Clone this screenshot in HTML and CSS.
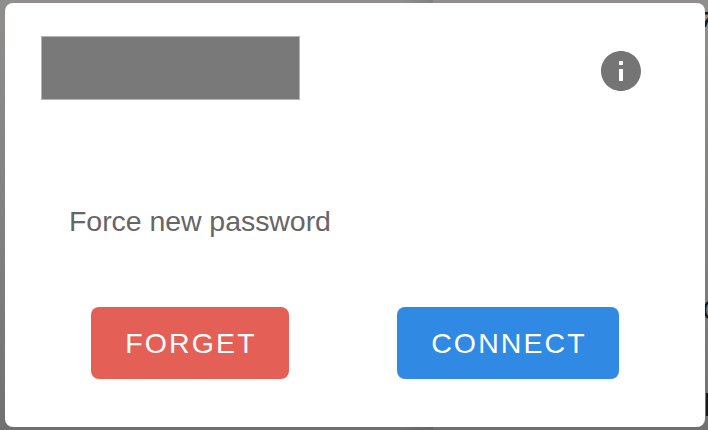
FILE: index.html
```html
<!DOCTYPE html>
<html lang="en">
<head>
<meta charset="utf-8">
<title>Connect</title>
<link rel="stylesheet" href="styles.css">
</head>
<body>
<span class="behind behind-top">7</span>
<span class="behind behind-mid">O</span>
<span class="behind behind-block"></span>
<main class="dialog">
  <header class="head">
    <div class="name"></div>
    <svg class="info" viewBox="2 2 20 20" aria-label="Info">
      <path d="M12 2C6.480 2 2 6.480 2 12s4.480 10 10 10 10-4.480 10-10S17.520 2 12 2zm1 15h-2v-6h2v6zm0-8h-2V7h2v2z"/>
    </svg>
  </header>
  <p class="option">Force new password</p>
  <div class="actions">
    <button class="btn forget">FORGET</button>
    <button class="btn connect">CONNECT</button>
  </div>
</main>
</body>
</html>
```
FILE: styles.css
```css
* { box-sizing: border-box; }
body {
  margin: 0;
  height: 430px;
  padding: 3px 3px 3px 5px;
  overflow: hidden;
  position: relative;
  background:
    linear-gradient(90deg, transparent 400px, rgba(0, 0, 0, .1) 433px, transparent 433px),
    linear-gradient(#908f8e, #7c7c7c 70%, #707070);
  font-family: "Liberation Sans", Arial, sans-serif;
}
.dialog {
  position: relative;
  height: 424px;
  padding: 33px 64px 48px 36px;
  border-radius: 8px;
  background: #fff;
}
.head {
  display: flex;
  justify-content: space-between;
  align-items: flex-start;
}
.name {
  width: 259px;
  height: 64px;
  background: #797979;
  border: 1px solid #b4b4b4;
}
.info {
  width: 40px;
  height: 40px;
  margin-top: 15px;
  fill: #757575;
}
.option {
  margin: 105px 0 0 28px;
  font-size: 28.5px;
  line-height: 32px;
  letter-spacing: -.06px;
  color: #666;
}
.actions {
  display: flex;
  gap: 108px;
  margin: 70px 0 0 50px;
}
.btn {
  height: 72px;
  padding: 0 0 0 2px;
  border: 0;
  border-radius: 8px;
  font-family: inherit;
  font-size: 28.5px;
  letter-spacing: 2.1px;
  color: #fff;
}
.forget { width: 198px; background: #e46056; }
.connect { width: 222px; background: #3089e2; }
.behind {
  position: absolute;
  color: #191919;
  font-size: 28px;
  line-height: 32px;
}
.behind-top { left: 701px; top: 4px; font-weight: bold; font-style: italic; font-size: 22px; }
.behind-mid { left: 702px; top: 294px; font-size: 29px; }
.behind-block { left: 706px; top: 393px; width: 2px; height: 23px; background: #191919; }
```
